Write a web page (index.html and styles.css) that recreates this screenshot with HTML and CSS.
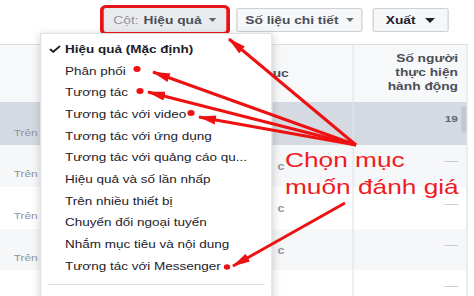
FILE: index.html
```html
<!DOCTYPE html>
<html lang="vi">
<head>
<meta charset="utf-8">
<title>Cột: Hiệu quả</title>
<link rel="stylesheet" href="styles.css">
</head>
<body>
<div class="page">
  <div class="toolbar">
    <button class="btn btn-cols"><span class="lbl">Cột:</span><b>Hiệu quả</b><span class="caret"></span></button>
    <button class="btn btn-metrics"><b>Số liệu chi tiết</b><span class="caret"></span></button>
    <button class="btn btn-export"><b class="dark">Xuất</b><span class="caret caret-dark"></span></button>
  </div>
  <div class="table">
    <div class="row head">
      <div class="c1"></div>
      <div class="c2">Mục</div>
      <div class="c3">Số người<br>thực hiện<br>hành động</div>
    </div>
    <div class="row r1 selected">
      <div class="c1">Trên</div>
      <div class="c2"></div>
      <div class="c3"><span class="num">19</span></div>
    </div>
    <div class="row r2 alt">
      <div class="c1">Trên</div>
      <div class="c2">c</div>
      <div class="c3"><span class="dash">—</span></div>
    </div>
    <div class="row r3">
      <div class="c1">Trên</div>
      <div class="c2">c</div>
      <div class="c3"><span class="dash">—</span></div>
    </div>
    <div class="row r4 alt">
      <div class="c1">Trên</div>
      <div class="c2">c</div>
      <div class="c3"><span class="dash">—</span></div>
    </div>
    <div class="row r5">
      <div class="c1"></div>
      <div class="c2"></div>
      <div class="c3"><span class="dash">—</span></div>
    </div>
  </div>
  <div class="thumb"></div>
  <div class="menu">
    <div class="item item-checked"><svg class="check" viewBox="0 0 10 8" width="10" height="8"><path d="M1 4.2 L3.6 6.8 L9 1"/></svg>Hiệu quả (Mặc định)</div>
    <div class="item">Phân phối</div>
    <div class="item">Tương tác</div>
    <div class="item">Tương tác với video</div>
    <div class="item">Tương tác với ứng dụng</div>
    <div class="item">Tương tác với quảng cáo qu...</div>
    <div class="item">Hiệu quả và số lần nhấp</div>
    <div class="item">Trên nhiều thiết bị</div>
    <div class="item">Chuyển đổi ngoại tuyến</div>
    <div class="item">Nhắm mục tiêu và nội dung</div>
    <div class="item">Tương tác với Messenger</div>
    <div class="sep"></div>
  </div>
  <div class="note">
    <div class="note-line">Chọn mục</div>
    <div class="note-line">muốn đánh giá</div>
  </div>
</div>
<svg class="arrows" width="474" height="296" viewBox="0 0 474 296">
  <defs>
    <marker id="ah" markerUnits="userSpaceOnUse" markerWidth="18" markerHeight="10" viewBox="0 0 18 10" refX="17" refY="5" orient="auto">
      <path d="M0 0.5 L18 5 L0 9.5 Z" class="head-fill"/>
    </marker>
  </defs>
  <g class="arrow-lines">
    <line x1="356" y1="145" x2="229" y2="39" marker-end="url(#ah)"/>
    <line x1="356" y1="145" x2="153" y2="72" marker-end="url(#ah)"/>
    <line x1="356" y1="145" x2="148" y2="92" marker-end="url(#ah)"/>
    <line x1="356" y1="145" x2="199" y2="117" marker-end="url(#ah)"/>
    <line x1="345" y1="203" x2="233" y2="266" marker-end="url(#ah)"/>
  </g>
  <g class="dots">
    <ellipse cx="137" cy="69" rx="3.6" ry="3"/>
    <ellipse cx="140" cy="91" rx="3.6" ry="3"/>
    <ellipse cx="191" cy="113" rx="3.6" ry="3"/>
    <ellipse cx="227" cy="267" rx="3.2" ry="2.8"/>
  </g>
</svg>
</body>
</html>
```
FILE: styles.css
```css
html, body {
  margin: 0;
  height: 100%;
  overflow: hidden;
  background: #fff;
}
body {
  position: relative;
  font-family: "Liberation Sans", Arial, sans-serif;
}
.page {
  position: relative;
  width: 379.2px;
  height: 296px;
  overflow: hidden;
  transform: scaleX(1.25);
  transform-origin: 0 0;
  color: #1d2129;
  font-size: 11px;
}
.toolbar {
  display: flex;
  gap: 8px;
  height: 44px;
  box-sizing: border-box;
  padding: 8px 0 0 83px;
}
.btn {
  height: 24px;
  box-sizing: border-box;
  border: 1px solid #ced0d4;
  border-radius: 2px;
  background: #f6f7f9;
  font: inherit;
  font-size: 11px;
  color: #4b4f56;
  padding: 0;
  display: flex;
  align-items: center;
  justify-content: center;
  gap: 4px;
  white-space: nowrap;
  flex: none;
}
.btn b { font-weight: bold; }
.btn .dark { color: #1d2129; }
.btn-cols {
  width: 98px;
  background: #e9ebee;
  border-color: #e9ebee;
  outline: 3px solid #e8141b;
  outline-offset: 0;
}
.btn-cols .lbl { color: #90949c; }
.btn-metrics { width: 101px; }
.btn-export { width: 61px; gap: 6px; }
.caret {
  width: 0;
  height: 0;
  border-left: 3.5px solid transparent;
  border-right: 3.5px solid transparent;
  border-top: 4px solid #606770;
  margin-left: 2px;
}
.caret-dark {
  border-left-width: 4.5px;
  border-right-width: 4.5px;
  border-top: 5px solid #1d2129;
}
.table {
  width: 374.4px;
  box-sizing: border-box;
  border-top: 1px solid #dddfe2;
  border-right: 1px solid #dddfe2;
}
.row {
  display: grid;
  grid-template-columns: 32px 250px 1fr;
}
.head { height: 57px; background: #f7f8fa; }
.r1 { height: 43px; }
.r2 { height: 42px; }
.r3 { height: 42px; }
.r4 { height: 41px; }
.r5 { height: 42px; }
.selected { background: #d5dae2; }
.alt { background: #f6f7f9; }
.c1 {
  padding: 22px 0 0 11px;
  font-size: 9.5px;
  line-height: 14px;
  color: #90949c;
  white-space: nowrap;
  overflow: hidden;
}
.r1 .c1 { padding-top: 24px; }
.c2 {
  padding: 15px 0 0 190px;
  font-size: 10px;
  line-height: 14px;
  color: #90949c;
  font-weight: bold;
}
.c3 {
  border-left: 1px solid #e3e5e8;
  text-align: right;
  padding: 10px 7px 0 0;
  line-height: 10px;
}
.head .c2 {
  padding: 21px 0 0 177px;
  font-size: 11px;
  color: #4b4f56;
}
.head .c3 {
  padding-top: 6px;
  line-height: 14px;
  font-weight: bold;
  color: #4b4f56;
}
.r1 .c3 { padding-top: 11px; }
.r3 .c3 { padding-top: 11px; }
.num { font-size: 9.5px; font-weight: bold; color: #606770; }
.dash { color: #bec3c9; font-size: 11px; }
.thumb {
  position: absolute;
  left: 369.2px;
  top: 106px;
  width: 4px;
  height: 27px;
  border-radius: 2px;
  background: #c4c8ce;
}
.menu {
  position: absolute;
  left: 32px;
  top: 33px;
  width: 186.4px;
  height: 290px;
  box-sizing: border-box;
  background: #fff;
  border: 1px solid rgba(0, 0, 0, 0.12);
  box-shadow: 0 2px 8px rgba(0, 0, 0, 0.18);
  padding-top: 4px;
}
.item {
  display: flex;
  align-items: center;
  height: 21.7px;
  padding-left: 19px;
  white-space: nowrap;
  color: #1d2129;
  font-size: 10.8px;
}
.item-checked { font-weight: bold; }
.check {
  margin-left: -13px;
  margin-right: 3px;
  flex: none;
}
.check path {
  fill: none;
  stroke: #1d2129;
  stroke-width: 1.8;
}
.sep {
  height: 1px;
  background: #dddfe2;
  margin: 7px 5px 0 5px;
}
.note {
  position: absolute;
  left: 228px;
  top: 148px;
  display: flex;
  flex-direction: column;
  gap: 4px;
  color: #ee1c24;
  font-size: 21px;
  line-height: 23px;
  white-space: nowrap;
}
.arrows {
  position: absolute;
  left: 0;
  top: 0;
  pointer-events: none;
}
.arrow-lines line {
  stroke: #ee1111;
  stroke-width: 3;
  stroke-linecap: butt;
}
.head-fill { fill: #ee1111; }
.dots ellipse { fill: #ee1111; }
```
